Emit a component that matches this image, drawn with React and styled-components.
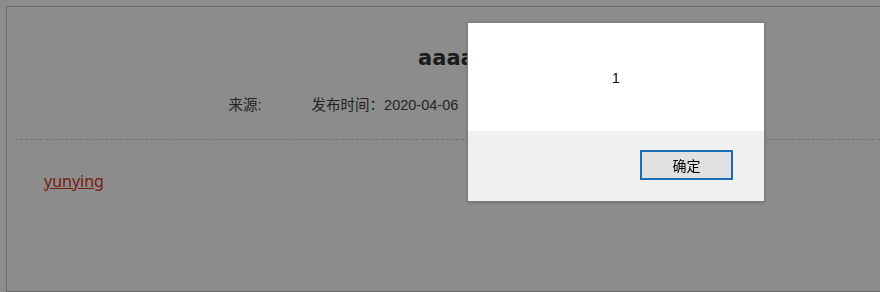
import React from 'react'
import styled, { createGlobalStyle } from 'styled-components'

const GlobalStyle = createGlobalStyle`
  html, body {
    margin: 0;
    padding: 0;
    background: #fff;
    overflow: hidden;
    font-family: "Liberation Sans", "Noto Sans CJK SC", sans-serif;
  }
`

const Page = styled.div`
  padding: 6px 0 0 6px;
  width: 900px;
  height: 292px;
  box-sizing: border-box;
`

const Article = styled.div`
  border: 1px solid #c4c4c4;
  border-right: none;
  height: 100%;
  box-sizing: border-box;
`

const Head = styled.div`
  margin: 0 0 0 8px;
  padding: 35px 0 24px;
  border-bottom: 1px dashed #d6d6d6;
  text-align: center;
`

const Title = styled.h1`
  margin: 0;
  font-family: "DejaVu Sans", sans-serif;
  font-size: 21px;
  line-height: 32px;
  font-weight: bold;
  color: #333;
  padding-right: 8px;
`

const Meta = styled.div`
  margin-top: 21px;
  font-size: 14.5px;
  line-height: 20px;
  color: #444;
  padding-right: 8px;
`

const MetaItem = styled.span`
  margin: 0 ${p => p.gap || 0}px 0 0;
`

const Body = styled.div`
  padding: 29px 0 0 37px;
`

const Link = styled.a`
  font-family: "Noto Sans", "Liberation Sans", sans-serif;
  font-size: 16px;
  line-height: 24px;
  color: #e0331f;
  text-decoration: underline;
`

const Mask = styled.div`
  position: fixed;
  inset: 0;
  background: rgba(0, 0, 0, 0.45);
`

const Dialog = styled.div`
  position: fixed;
  left: 467px;
  top: 22px;
  width: 298px;
  border: 1px solid #7d7d7d;
  box-sizing: border-box;
  background: #fff;
  box-shadow: 0 1px 3px rgba(0, 0, 0, 0.2);
`

const Message = styled.div`
  height: 108px;
  padding-top: 45px;
  box-sizing: border-box;
  text-align: center;
  font-size: 14px;
  line-height: 20px;
  color: #000;
`

const Footer = styled.div`
  height: 70px;
  background: #f0f0f0;
  display: flex;
  justify-content: flex-end;
  align-items: flex-start;
  padding: 19px 31px 0 0;
  box-sizing: border-box;
`

const Button = styled.button`
  width: 93px;
  height: 30px;
  border: 2px solid #1b6db3;
  background: #e1e1e1;
  font-family: "Noto Sans CJK SC", sans-serif;
  font-size: 14px;
  color: #000;
  padding: 0;
  cursor: pointer;
`

export default function App() {
  return (
    <>
      <GlobalStyle />
      <Page>
        <Article>
          <Head>
            <Title>aaaaa</Title>
            <Meta>
              <MetaItem gap={50}>来源:</MetaItem>
              <MetaItem gap={20}>发布时间：2020-04-06</MetaItem>
              <MetaItem gap={10}>浏览次数：12 次</MetaItem>
              <MetaItem>作者：admin</MetaItem>
            </Meta>
          </Head>
          <Body>
            <Link href="#">yunying</Link>
          </Body>
        </Article>
      </Page>
      <Mask />
      <Dialog>
        <Message>1</Message>
        <Footer>
          <Button>确定</Button>
        </Footer>
      </Dialog>
    </>
  )
}
